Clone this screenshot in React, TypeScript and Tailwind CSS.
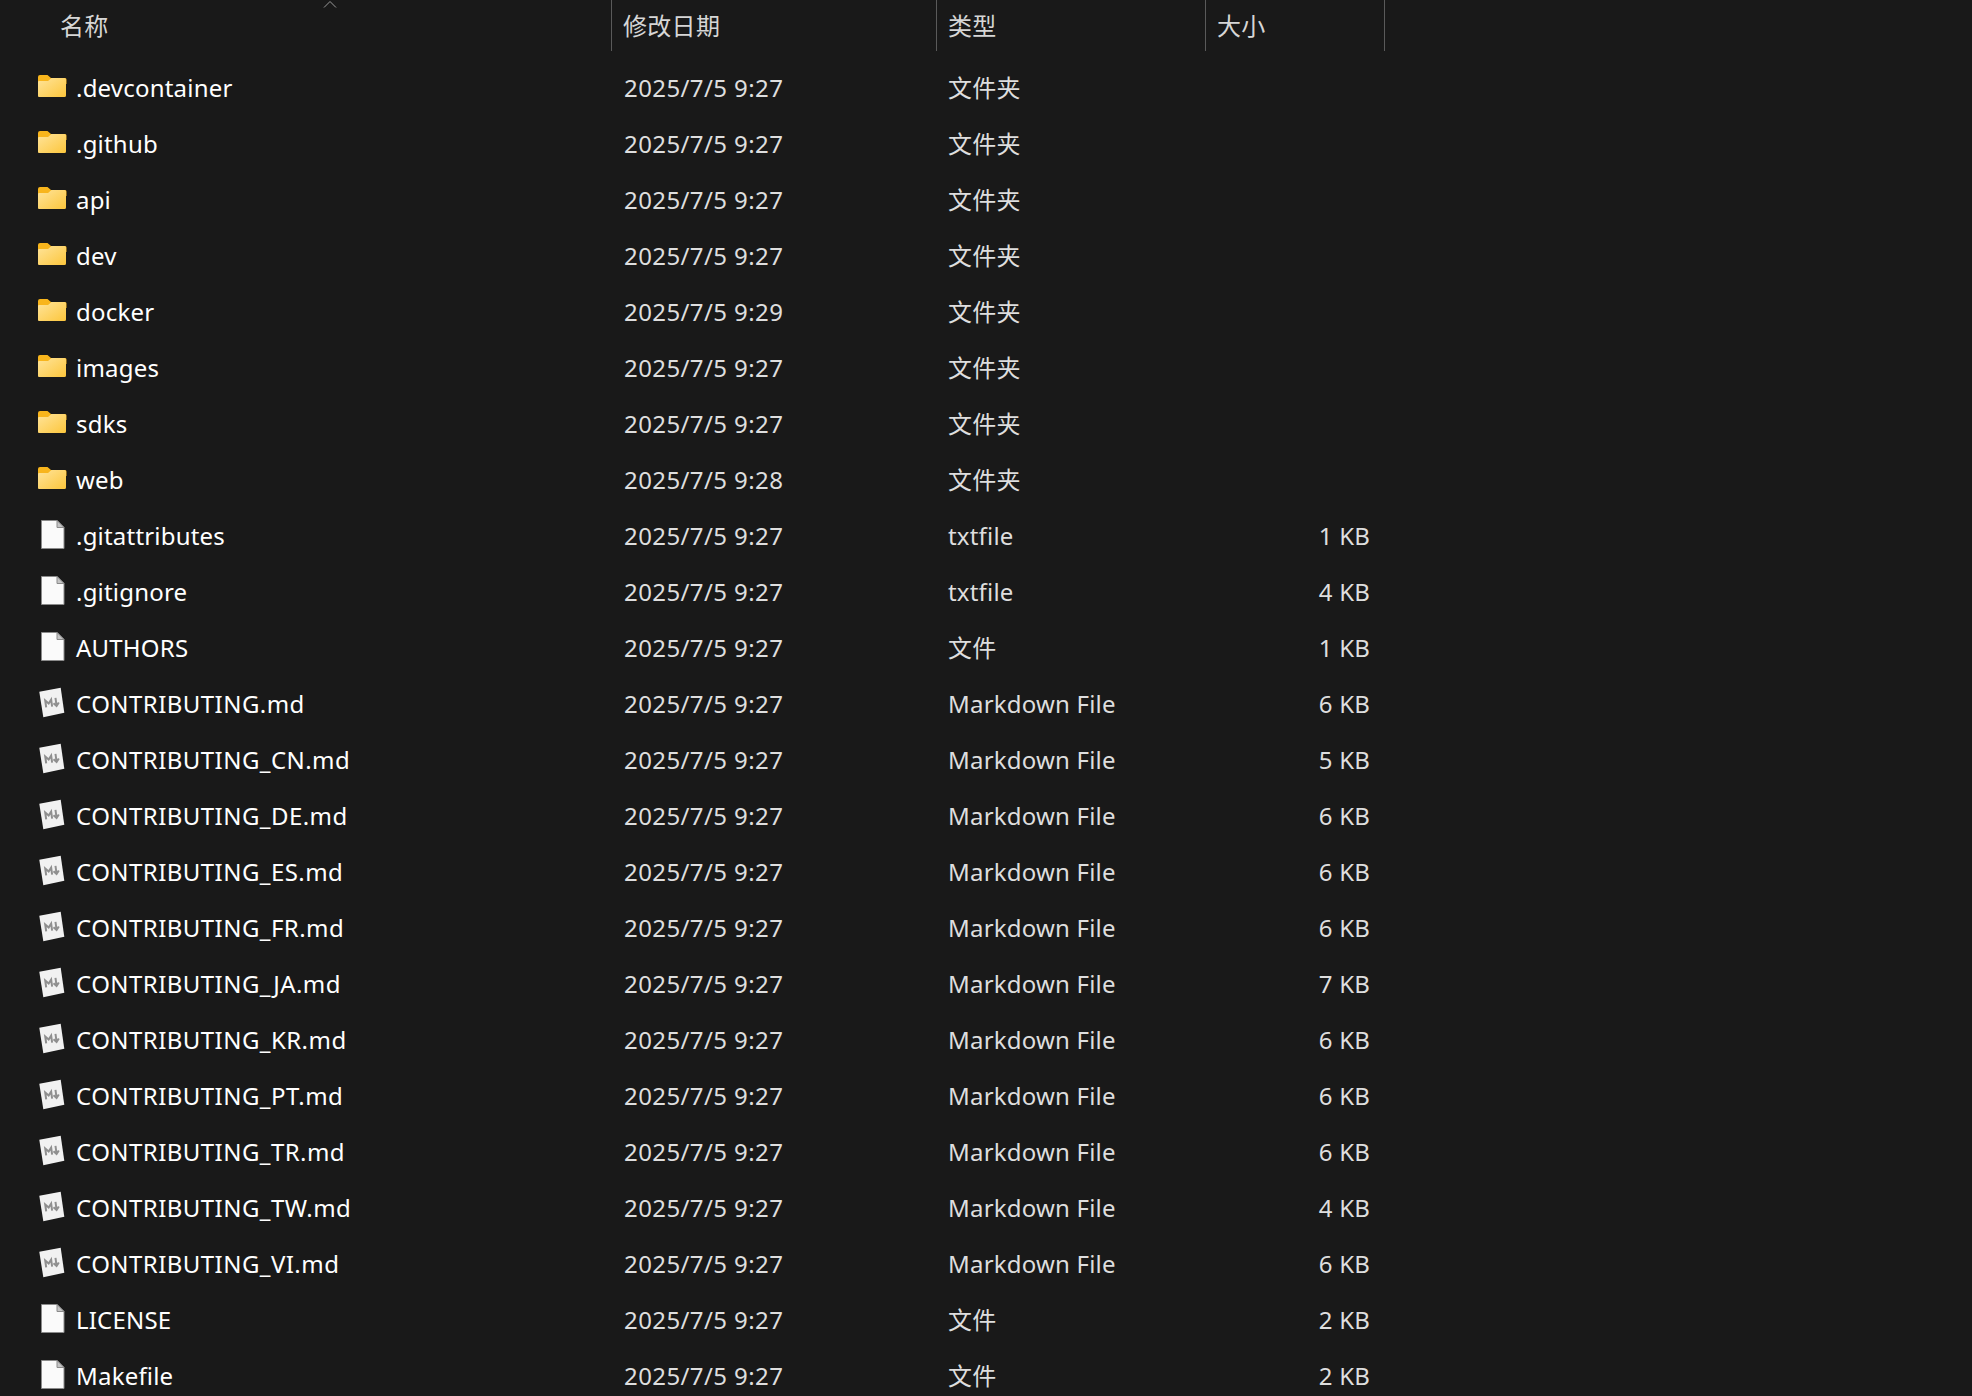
import React from 'react';

type Kind = 'folder' | 'file' | 'md';

type Row = {
  name: string;
  date: string;
  type: string;
  size?: string;
  kind: Kind;
};

const DAY = '2025/7/5 ';

const md = (name: string, size: string, time = '9:27'): Row => ({
  name,
  date: DAY + time,
  type: 'Markdown File',
  size,
  kind: 'md',
});

const folder = (name: string, time = '9:27'): Row => ({
  name,
  date: DAY + time,
  type: '文件夹',
  kind: 'folder',
});

const ROWS: Row[] = [
  folder('.devcontainer'),
  folder('.github'),
  folder('api'),
  folder('dev'),
  folder('docker', '9:29'),
  folder('images'),
  folder('sdks'),
  folder('web', '9:28'),
  { name: '.gitattributes', date: DAY + '9:27', type: 'txtfile', size: '1 KB', kind: 'file' },
  { name: '.gitignore', date: DAY + '9:27', type: 'txtfile', size: '4 KB', kind: 'file' },
  { name: 'AUTHORS', date: DAY + '9:27', type: '文件', size: '1 KB', kind: 'file' },
  md('CONTRIBUTING.md', '6 KB'),
  md('CONTRIBUTING_CN.md', '5 KB'),
  md('CONTRIBUTING_DE.md', '6 KB'),
  md('CONTRIBUTING_ES.md', '6 KB'),
  md('CONTRIBUTING_FR.md', '6 KB'),
  md('CONTRIBUTING_JA.md', '7 KB'),
  md('CONTRIBUTING_KR.md', '6 KB'),
  md('CONTRIBUTING_PT.md', '6 KB'),
  md('CONTRIBUTING_TR.md', '6 KB'),
  md('CONTRIBUTING_TW.md', '4 KB'),
  md('CONTRIBUTING_VI.md', '6 KB'),
  { name: 'LICENSE', date: DAY + '9:27', type: '文件', size: '2 KB', kind: 'file' },
  { name: 'Makefile', date: DAY + '9:27', type: '文件', size: '2 KB', kind: 'file' },
];

const FolderIcon = () => (
  <svg width="30" height="24" viewBox="0 0 30 24" className="block">
    <defs>
      <linearGradient id="folderFront" x1="0" y1="0" x2="1" y2="1">
        <stop offset="0" stopColor="#ffe49a" />
        <stop offset="1" stopColor="#fcc63c" />
      </linearGradient>
    </defs>
    <path d="M1 3a2 2 0 0 1 2-2h7.500l3.500 3h14a1.500 1.500 0 0 1 1.500 1.500V10H1z" fill="#f8b51c" />
    <path d="M1 22V8a1 1 0 0 1 1-1h9l3.500-3h13a1.500 1.500 0 0 1 1.500 1.500V21.500a1.500 1.500 0 0 1-1.500 1.500H2a1 1 0 0 1-1-1z" fill="url(#folderFront)" />
  </svg>
);

const FileIcon = () => (
  <svg width="30" height="30" viewBox="0 0 30 30" className="block">
    <path d="M4.500 1.500h15.500l7 7v21H4.500z" fill="#fafafa" stroke="#8a8a8a" strokeWidth="1" />
    <path d="M20 1.500v7h7z" fill="#c4c4c4" stroke="#8a8a8a" strokeWidth="1" strokeLinejoin="round" />
  </svg>
);

const MdIcon = () => (
  <svg width="30" height="32" viewBox="0 0 30 32" className="block">
    <path d="M2.300 5.700L23.700 1.700 27.300 26.700 6.300 31.300z" fill="#f1f1f1" />
    <path
      d="M8.500 20.500v-7l3 3.500 3-3.500v7M19 12.500v8M16.300 17.500l2.700 3 2.700-3"
      transform="rotate(-8 15 16)"
      fill="none"
      stroke="#8f8f8f"
      strokeWidth="2"
    />
  </svg>
);

const RowIcon = ({ kind }: { kind: Kind }) => {
  if (kind === 'folder') return <FolderIcon />;
  if (kind === 'md') return <MdIcon />;
  return <FileIcon />;
};

const HeaderCell = ({ label, className }: { label: string; className: string }) => (
  <div className={`h-full flex items-center border-r border-[#5a5a5a] ${className}`}>
    <span className="text-[24px] tracking-[0.3px] text-[#d6d6d6]">{label}</span>
  </div>
);

const App: React.FC = () => {
  return (
    <div className="relative w-[1972px] h-[1396px] overflow-hidden bg-[#191919] font-['Noto_Sans','Noto_Sans_CJK_SC',sans-serif]">
      {/* Sort caret */}
      <svg width="14" height="8" viewBox="0 0 14 8" className="absolute left-[323px] top-0">
        <path d="M1 7.500L7 1.500l6 6" fill="none" stroke="#9a9a9a" strokeWidth="1" />
      </svg>

      {/* Column headers */}
      <div className="flex h-[51px] w-[1385px] mb-[9px]">
        <HeaderCell label="名称" className="w-[612px] pl-[60px]" />
        <HeaderCell label="修改日期" className="w-[325px] pl-[11px]" />
        <HeaderCell label="类型" className="w-[269px] pl-[11px]" />
        <HeaderCell label="大小" className="w-[179px] pl-[11px]" />
      </div>

      {/* File rows */}
      {ROWS.map((row) => (
        <div key={row.name} className="flex items-center h-14 w-[1385px] text-[24px] tracking-[0.2px]">
          <div className="w-[76px] pl-[37px] flex-none mb-1">
            <RowIcon kind={row.kind} />
          </div>
          <div className={`w-[548px] flex-none text-white ${row.kind === 'md' ? 'tracking-[0.45px]' : ''}`}>{row.name}</div>
          <div className="w-[324px] flex-none text-[#dedede] tracking-[0.4px]">{row.date}</div>
          <div className="w-[269px] flex-none text-[#dedede]">{row.type}</div>
          <div className="w-[153px] flex-none text-right text-[#dedede]">{row.size}</div>
        </div>
      ))}
    </div>
  );
};

export default App;
